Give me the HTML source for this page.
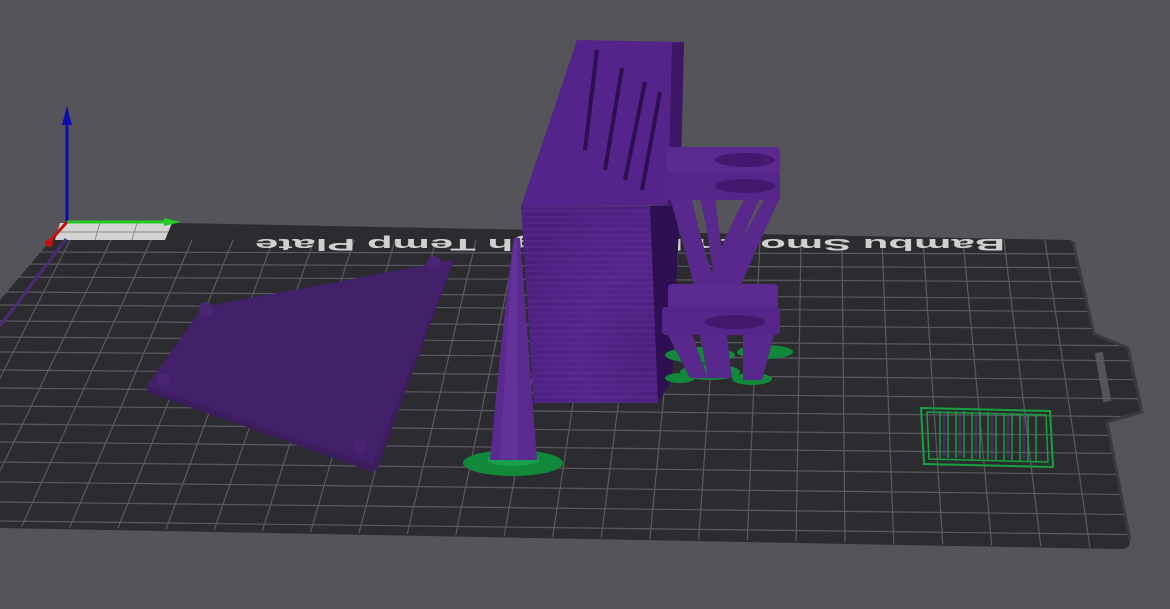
<!DOCTYPE html>
<html><head><meta charset="utf-8"><style>
html,body{margin:0;padding:0;background:#545459;}
svg{display:block}
</style></head><body>
<svg width="1170" height="609" viewBox="0 0 1170 609" xmlns="http://www.w3.org/2000/svg">
<defs>
<clipPath id="bed"><path d="M67,221 L1070,240 L1073,242 L1094,334 L1128,348 L1142,412 L1107,422 L1130,540 Q1130,548 1120,548 L0,526 L0,300 Z"/></clipPath>
<radialGradient id="ring" cx="0.9" cy="0.75" r="0.9"><stop offset="0" stop-color="#4a1d7a"/><stop offset="0.5" stop-color="#5a2a90"/><stop offset="1" stop-color="#4d2080"/></radialGradient>
<pattern id="rings" width="6" height="6" patternUnits="userSpaceOnUse"><rect width="6" height="6" fill="#4d2080"/><rect width="6" height="2" fill="#5b2c92"/></pattern>
</defs>
<rect width="1170" height="609" fill="#545459"/>
<path d="M67,221 L1070,240 L1073,242 L1094,334 L1128,348 L1142,412 L1107,422 L1130,540 Q1130,550 1118,549 L0,528 L0,300 Z" fill="#2c2c30"/>
<rect x="1099" y="352" width="8" height="50" fill="#545459" transform="rotate(-10 1103 377)"/>
<g clip-path="url(#bed)" stroke="#5a5a60" stroke-width="1.2" fill="none">
<path d="M0,252 L1170,254"/><path d="M0,264 L1170,268"/><path d="M0,277 L1170,282"/><path d="M0,292 L1170,299"/><path d="M0,305 L1170,312"/><path d="M0,321 L1170,329"/><path d="M0,337 L1170,346"/><path d="M0,352 L1170,361"/><path d="M0,370 L1170,380"/><path d="M0,388 L1170,399"/><path d="M0,406 L1170,417"/><path d="M0,424 L1170,436"/><path d="M0,442 L1170,454"/><path d="M0,462 L1170,475"/><path d="M0,482 L1170,495"/><path d="M0,502 L1170,515"/><path d="M0,521 L1170,535"/>
<path d="M1045,240 L1090,548"/><path d="M1004,240 L1041,548"/><path d="M963,240 L992,548"/><path d="M923,240 L943,548"/><path d="M882,240 L894,548"/><path d="M842,240 L845,548"/><path d="M801,240 L796,548"/><path d="M760,240 L747,548"/><path d="M720,240 L698,548"/><path d="M679,240 L649,548"/><path d="M639,240 L600,548"/><path d="M598,240 L551,548"/><path d="M557,240 L502,548"/><path d="M517,240 L453,548"/><path d="M476,240 L404,548"/><path d="M436,240 L355,548"/><path d="M395,240 L306,548"/><path d="M354,240 L257,548"/><path d="M314,240 L208,548"/><path d="M273,240 L159,548"/><path d="M233,240 L110,548"/><path d="M192,240 L61,548"/><path d="M151,240 L12,548"/><path d="M111,240 L-37,548"/><path d="M70,240 L-86,548"/>
</g>
<path d="M1073,242 L1094,334 L1128,348 L1142,412 L1107,422 L1130,540" fill="none" stroke="#3a3a3f" stroke-width="3"/>
<path d="M60,223 L172,223 L165,240 L55,240 Z" fill="#d4d4d4"/>
<path d="M58,232 L168,232 M100,223 L95,240 M137,223 L132,240" stroke="#8a8a8a" stroke-width="1"/>
<line x1="67" y1="221" x2="67" y2="115" stroke="#0c0cb0" stroke-width="3"/>
<path d="M62,125 L67,106 L72,125 Z" fill="#0c0cb0"/>
<line x1="67" y1="222" x2="172" y2="222" stroke="#22cc22" stroke-width="3"/>
<path d="M164,218 L181,222 L164,226 Z" fill="#22cc22"/>
<line x1="67" y1="222" x2="51" y2="240" stroke="#c01010" stroke-width="3"/>
<circle cx="49" cy="243" r="4" fill="#c01010"/>
<line x1="66" y1="239" x2="0" y2="326" stroke="#4d2a78" stroke-width="3"/>
<text x="0" y="0" transform="translate(1005,239) rotate(180)" font-family="Liberation Sans, sans-serif" font-size="17" font-weight="bold" fill="#d0d0d0" textLength="750" lengthAdjust="spacingAndGlyphs">Bambu Smooth PEI / High Temp Plate</text>
<path d="M454,260 L203,307 L147,388 L147,392 L373,472 L377,470 Z" fill="#3c1d5e"/>
<path d="M454,260 L203,307 L147,386 L372,465 Z" fill="#43206a"/>
<circle cx="434" cy="263" r="7" fill="#4a2575"/><circle cx="206" cy="309" r="7" fill="#4a2575"/><circle cx="164" cy="380" r="7" fill="#4a2575"/><circle cx="360" cy="446" r="7" fill="#4a2575"/>
<ellipse cx="513" cy="463" rx="50" ry="13" fill="#11883a"/>
<ellipse cx="513" cy="460" rx="26" ry="6" fill="#1aa04a"/>
<path d="M514,238 Q505,300 490,460 L537,460 Q525,300 520,238 Z" fill="#5a2a8e"/>
<path d="M514,238 Q509,300 500,458 L518,460 Q518,300 517,238 Z" fill="#6a38a4" opacity="0.6"/>
<path d="M577,40 L684,42 L680,205 L521,207 Z" fill="#55248a"/>
<path d="M684,42 L680,205 L668,205 L672,43 Z" fill="#3b1766"/>
<path d="M597,50 L585,150 M622,68 L605,170 M645,82 L625,180 M660,92 L642,190" stroke="#2c1050" stroke-width="4"/>
<path d="M521,207 L656,206 L658,403 L534,403 Z" fill="url(#rings)"/>
<path d="M521,207 L656,206 L658,403 L534,403 Z" fill="url(#ring)" opacity="0.55"/>
<path d="M650,206 L680,205 L672,380 L658,403 Z" fill="#2d0f52"/>
<ellipse cx="700" cy="355" rx="35" ry="8" fill="#11883a"/>
<ellipse cx="765" cy="352" rx="28" ry="7" fill="#11883a"/>
<ellipse cx="710" cy="372" rx="30" ry="8" fill="#11883a"/>
<ellipse cx="752" cy="379" rx="20" ry="6" fill="#11883a"/>
<ellipse cx="680" cy="378" rx="15" ry="5" fill="#11883a"/>
<path d="M670,198 Q685,250 698,300 L722,300 Q702,250 692,198 Z M765,198 Q735,250 712,300 L735,300 Q755,250 780,198 Z M745,198 Q722,240 706,290 L724,290 Q740,240 760,198 Z M700,198 Q710,240 715,290 L728,290 Q720,240 715,198 Z" fill="#58288c"/>
<path d="M668,335 L690,378 L708,378 L692,335 Z M700,335 L708,378 L732,378 L727,335 Z M743,335 L743,380 L762,380 L774,335 Z" fill="#58288c"/>
<rect x="667" y="147" width="113" height="28" rx="4" fill="#5a2a90"/>
<rect x="664" y="172" width="116" height="28" rx="4" fill="#55268a"/>
<rect x="668" y="284" width="110" height="26" rx="4" fill="#5a2a90"/>
<rect x="662" y="307" width="118" height="28" rx="4" fill="#55268a"/>
<ellipse cx="745" cy="160" rx="30" ry="7" fill="#42196e"/><ellipse cx="745" cy="186" rx="30" ry="7" fill="#42196e"/><ellipse cx="735" cy="322" rx="30" ry="7" fill="#42196e"/>
<path d="M921,408 L1050,411 L1053,467 L924,464 Z" fill="none" stroke="#16a040" stroke-width="2"/>
<path d="M927,412 L1046,415 L1048,462 L929,459 Z" fill="none" stroke="#16a040" stroke-width="1.5"/>
<g stroke="#1a9a45" stroke-width="1.5">
<path d="M940,411 V458 M948,411 V458 M956,411 V458 M964,411 V458 M972,412 V459 M980,412 V459 M988,412 V459 M996,413 V460 M1004,413 V460 M1012,413 V460 M1020,414 V461 M1028,414 V461 M1036,414 V461"/>
</g>
<g stroke="#6a34a0" stroke-width="1">
<path d="M944,412 V456 M960,412 V456 M976,413 V457 M992,413 V458 M1008,414 V458 M1024,414 V459"/>
</g>
</svg>
</body></html>
